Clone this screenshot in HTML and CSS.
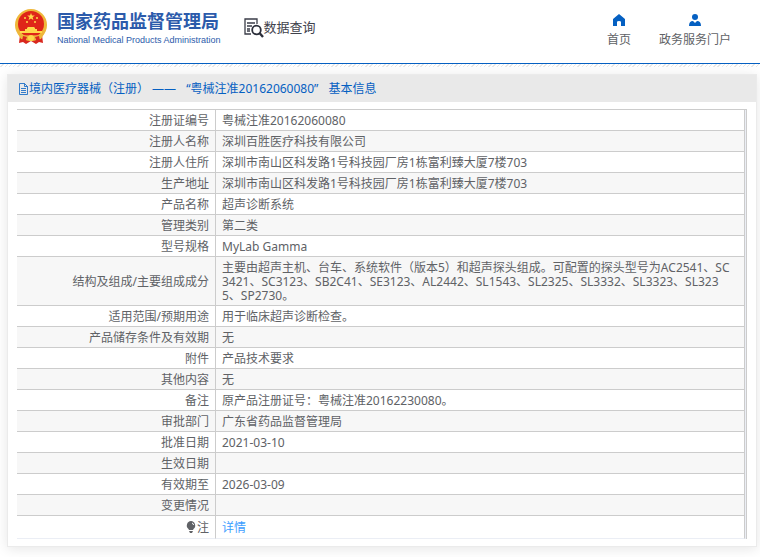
FILE: index.html
```html
<!DOCTYPE html>
<html lang="zh-CN">
<head>
  <meta charset="UTF-8">
  <title>国家药品监督管理局 数据查询</title>
  <link rel="stylesheet" href="styles.css">
</head>
<body>

<header class="header">
  <div class="brand">
    <svg class="emblem" viewBox="0 0 32 35" aria-hidden="true">
      <path d="M5 26L4 34l4-1 3 2 5-3 5 3 3-2 4 1-1-8z" fill="#d9281e"/>
      <circle cx="16" cy="16" r="16" fill="#efb73a"/>
      <circle cx="16" cy="15" r="13" fill="#df2519"/>
      <path d="M16 4l1 2.600h2.800l-2.200 1.700.8 2.700-2.400-1.600-2.400 1.600.8-2.700-2.200-1.700H15z" fill="#ffd84a"/>
      <g fill="#ffd84a">
        <circle cx="10" cy="9" r="1"/><circle cx="22" cy="9" r="1"/>
        <circle cx="12" cy="13" r="1"/><circle cx="20" cy="13" r="1"/>
        <path d="M12 19l1-1h6l1 1v1h2v2h5v2H5v-2h5v-2h2z"/>
      </g>
      <path d="M3 25q13 3 26 0l-3 5-5 1-5-2-5 2-5-1z" fill="#efb73a"/>
      <path d="M8 27l4 1-2 5-3-1zM24 27l-4 1 2 5 3-1z" fill="#d9281e"/>
      <circle cx="16" cy="29" r="3" fill="#ffd84a"/>
    </svg>
    <div class="brand-text">
      <div class="brand-cn">国家药品监督管理局</div>
      <div class="brand-en">National Medical Products Administration</div>
    </div>
    <div class="query">
      <svg class="query-icon" viewBox="0 0 20 20" aria-hidden="true">
        <path d="M7 16H1V1h12v5M3 5h8M3 8h5M3 11h3M3 13h3" fill="none" stroke="#3a3d48" stroke-width="1.300"/>
        <circle cx="12.500" cy="12" r="4.300" fill="#fff" stroke="#2b2e3a" stroke-width="1.800"/>
        <path d="M15.500 15l3.500 4" stroke="#2b2e3a" stroke-width="2.400"/>
      </svg>
      <span>数据查询</span>
    </div>
  </div>
  <nav class="nav">
    <a href="#">
      <svg viewBox="0 0 12 12" aria-hidden="true"><path d="M6 0l6 5v7H8V8q0-1-2-1T4 8v4H0V5z" fill="#0560c2"/></svg>
      首页
    </a>
    <a href="#">
      <svg viewBox="0 0 12 12" aria-hidden="true"><circle cx="6" cy="3" r="3" fill="#0560c2"/><path d="M0 12q0-5 4-5l2 2 2-2q4 0 4 5z" fill="#0560c2"/></svg>
      政务服务门户
    </a>
  </nav>
</header>
<div class="hatch"></div>

<main class="card">
  <h1 class="card-title">
    <svg viewBox="0 0 11 12" aria-hidden="true"><path d="M1.500.5h5l3 3v8h-8zM6.500.5v3h3M3 5.500h5M3 7.500h5M3 9.500h5" fill="none" stroke="#0560c2" stroke-width=".8"/></svg>
    <span>境内医疗器械（注册） —— <span class="quoted">“粤械注准20162060080”</span> 基本信息</span>
  </h1>
  <div class="table-wrap">
    <table class="info">
      <tbody>
        <tr><th scope="row">注册证编号</th><td>粤械注准20162060080</td></tr>
        <tr><th scope="row">注册人名称</th><td>深圳百胜医疗科技有限公司</td></tr>
        <tr><th scope="row">注册人住所</th><td>深圳市南山区科发路1号科技园厂房1栋富利臻大厦7楼703</td></tr>
        <tr><th scope="row">生产地址</th><td>深圳市南山区科发路1号科技园厂房1栋富利臻大厦7楼703</td></tr>
        <tr><th scope="row">产品名称</th><td>超声诊断系统</td></tr>
        <tr><th scope="row">管理类别</th><td>第二类</td></tr>
        <tr><th scope="row">型号规格</th><td>MyLab Gamma</td></tr>
        <tr><th scope="row">结构及组成/主要组成成分</th><td>主要由超声主机、台车、系统软件（版本5）和超声探头组成。可配置的探头型号为AC2541、SC3421、SC3123、SB2C41、SE3123、AL2442、SL1543、SL2325、SL3332、SL3323、SL3235、SP2730。</td></tr>
        <tr><th scope="row">适用范围/预期用途</th><td>用于临床超声诊断检查。</td></tr>
        <tr><th scope="row">产品储存条件及有效期</th><td>无</td></tr>
        <tr><th scope="row">附件</th><td>产品技术要求</td></tr>
        <tr><th scope="row">其他内容</th><td>无</td></tr>
        <tr><th scope="row">备注</th><td>原产品注册证号：粤械注准20162230080。</td></tr>
        <tr><th scope="row">审批部门</th><td>广东省药品监督管理局</td></tr>
        <tr><th scope="row">批准日期</th><td>2021-03-10</td></tr>
        <tr><th scope="row">生效日期</th><td></td></tr>
        <tr><th scope="row">有效期至</th><td>2026-03-09</td></tr>
        <tr><th scope="row">变更情况</th><td></td></tr>
        <tr class="note">
          <th scope="row"><svg viewBox="0 0 10 12" aria-hidden="true"><path d="M5 0a4.500 4.500 0 0 1 2.500 8L7 9H3l-.5-1A4.500 4.500 0 0 1 5 0zM3 10h4l-1 2H4z" fill="#606266"/><path d="M6 2q1.500.5 1.500 2" fill="none" stroke="#fff"/></svg>注</th>
          <td><a href="#">详情</a></td>
        </tr>
      </tbody>
    </table>
  </div>
</main>

</body>
</html>
```

FILE: styles.css
```css
* {
  box-sizing: border-box;
}
body {
  margin: 0;
  background: #fff;
  color: #606266;
  font-family: "Noto Sans", "Noto Sans CJK SC", sans-serif;
  font-size: 12px;
  line-height: 14px;
}
a {
  color: #409eff;
  text-decoration: none;
}
.header {
  display: flex;
  justify-content: space-between;
  height: 64px;
  padding: 0 29px 0 15px;
  border-bottom: 1px solid #0560c2;
}
.brand {
  display: flex;
  align-items: flex-start;
  padding-top: 9px;
}
.emblem {
  width: 32px;
  height: 35px;
}
.brand-text {
  margin-left: 10px;
  color: #2c5bab;
  white-space: nowrap;
}
.brand-cn {
  font-size: 18px;
  font-weight: bold;
  line-height: 25px;
}
.brand-en {
  font-family: "Liberation Sans", sans-serif;
  font-size: 9px;
  line-height: 12px;
}
.query {
  display: flex;
  margin: 9px 0 0 23px;
  color: #3f424c;
  font-size: 13px;
  line-height: 18px;
}
.query-icon {
  width: 20px;
  height: 20px;
}
.nav {
  display: flex;
  gap: 28px;
  padding-top: 14px;
}
.nav a {
  display: flex;
  flex-direction: column;
  align-items: center;
  gap: 5px;
  color: #606266;
  line-height: 18px;
}
.nav svg {
  width: 12px;
  height: 12px;
}
.hatch {
  height: 3px;
  background: repeating-linear-gradient(135deg, #fff 0 2px, #e8e8e8 2px 3px);
}
.card {
  margin: 7px 3px 10px 7px;
  border: 1px solid #ebebeb;
  box-shadow: 0 2px 12px rgba(0, 0, 0, 0.1);
}
.card-title {
  display: flex;
  align-items: center;
  margin: 0;
  padding: 5px 10px;
  background: #e9e9e9;
  color: #0560c2;
  font-size: 12px;
  font-weight: normal;
  line-height: 17px;
}
.card-title svg {
  width: 11px;
  height: 12px;
}
.quoted {
  margin: 0 7px;
}
.table-wrap {
  margin: 7px 9px;
  padding-right: 1px;
  border-top: 1px solid #ccc;
  border-right: 1px solid #ccc;
  background: #ebeef5;
}
.info {
  width: 100%;
  border-collapse: separate;
  border-spacing: 0;
  background: #fff;
}
.info th,
.info td {
  height: 21px;
  padding: 4px 6px 2px;
  border-right: 1px solid #ccc;
  border-bottom: 1px solid #ccc;
  font-weight: normal;
  word-break: break-all;
}
.info th {
  width: 199px;
  text-align: right;
}
.info td {
  padding-right: 10px;
}
.info tr:nth-child(even) {
  background: #f7f7f7;
}
.info .note th,
.info .note td {
  height: 23px;
  border-bottom-color: #ebeef5;
}
.note svg {
  width: 10px;
  height: 12px;
  margin-right: 1px;
  vertical-align: -1px;
}
```
